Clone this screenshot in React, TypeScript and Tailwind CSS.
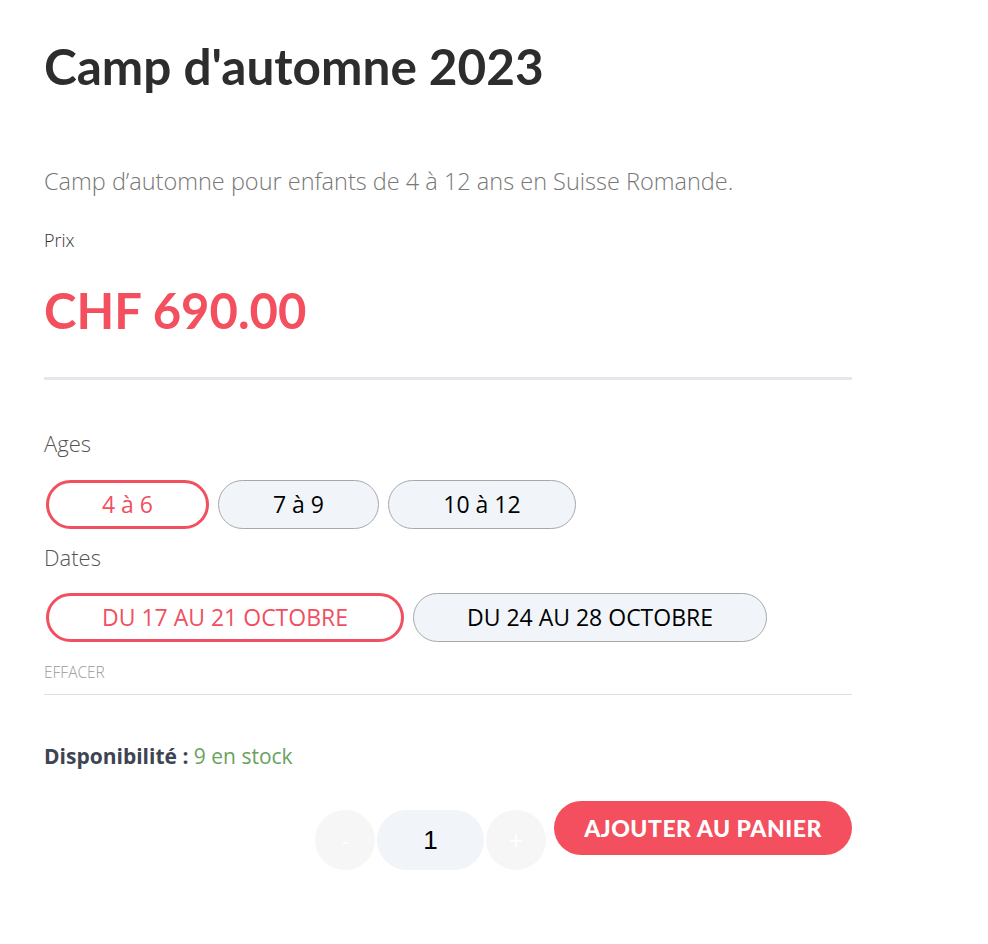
import React, { useState } from 'react';

const ages = ['4 à 6', '7 à 9', '10 à 12'];
const dates = ['DU 17 AU 21 OCTOBRE', 'DU 24 AU 28 OCTOBRE'];

const Pill: React.FC<{ label: string; active: boolean; width: string; onClick: () => void }> = ({ label, active, width, onClick }) => (
  <button
    onClick={onClick}
    className={`h-[49px] ${width} rounded-full text-[23px] font-['Open_Sans',sans-serif] ${
      active
        ? 'border-[3px] border-[#f0505f] bg-white text-[#f0505f]'
        : 'border-[1.5px] border-[#a8a8a8] bg-[#f1f5f9] text-black'
    }`}
  >
    {label}
  </button>
);

export default function App() {
  const [age, setAge] = useState(0);
  const [date, setDate] = useState(0);
  const [qty, setQty] = useState(1);

  return (
    <div className="min-h-screen bg-white">
      <div className="w-[852px] pl-[44px] pt-[36px] font-['Open_Sans',sans-serif]">
        {/* Title */}
        <h1 className="font-['Lato',sans-serif] text-[49.5px] font-bold leading-[60px] text-[#2d2d2d]">
          Camp d'automne 2023
        </h1>

        <p className="mt-[70px] text-[23.5px] font-light leading-[30px] text-[#777]">
          Camp d’automne pour enfants de 4 à 12 ans en Suisse Romande.
        </p>

        <p className="mt-[32px] text-[18px] font-light leading-[24px] text-[#333]">Prix</p>

        <p className="mt-[30px] font-['Lato',sans-serif] text-[49px] font-bold leading-[56px] text-[#f34f5e]">
          CHF 690.00
        </p>

        <div className="mt-[39px] h-[3px] bg-[#e6e6ee]" />

        {/* Ages */}
        <p className="mt-[48px] text-[22px] font-light leading-[30px] text-[#555]">Ages</p>
        <div className="mt-[22px] flex gap-[9px] pl-[2px]">
          {ages.map((a, i) => (
            <Pill
              key={a}
              label={a}
              active={age === i}
              width={i === 0 ? 'w-[163px]' : i === 1 ? 'w-[161px]' : 'w-[188px]'}
              onClick={() => setAge(i)}
            />
          ))}
        </div>

        {/* Dates */}
        <p className="mt-[13px] text-[22px] font-light leading-[30px] text-[#555]">Dates</p>
        <div className="mt-[21px] flex gap-[9px] pl-[2px]">
          {dates.map((d, i) => (
            <Pill
              key={d}
              label={d}
              active={date === i}
              width={i === 0 ? 'w-[358px]' : 'w-[354px]'}
              onClick={() => setDate(i)}
            />
          ))}
        </div>

        <button className="mt-[20px] block text-[15.5px] font-light uppercase leading-[20px] text-[#999]">
          Effacer
        </button>
        <div className="mt-[12px] h-px bg-[#dedede]" />

        {/* Availability */}
        <p className="mt-[46px] text-[21px] leading-[30px]">
          <span className="font-bold text-[#3d4452]">Disponibilité :</span>{' '}
          <span className="text-[#6aa160]">{qty > 0 ? '9 en stock' : ''}</span>
        </p>

        {/* Add to cart */}
        <div className="mt-[30px] flex items-start justify-end">
          <div className="mt-[9px] flex items-center">
            <button
              onClick={() => setQty(Math.max(1, qty - 1))}
              className="h-[60px] w-[60px] rounded-full bg-[#f6f6f6] text-[22px] text-white"
            >
              -
            </button>
            <div className="mx-[2px] flex h-[60px] w-[107px] items-center justify-center rounded-full bg-[#f1f5f9] font-['Liberation_Sans',sans-serif] text-[26px] text-black">
              {qty}
            </div>
            <button
              onClick={() => setQty(qty + 1)}
              className="h-[60px] w-[60px] rounded-full bg-[#f6f6f6] text-[26px] text-white"
            >
              +
            </button>
          </div>
          <button className="ml-[8px] h-[54px] w-[298px] rounded-full bg-[#f34f5e] font-['Lato',sans-serif] text-[23px] font-black uppercase tracking-[0.5px] text-white">
            Ajouter au panier
          </button>
        </div>
      </div>
    </div>
  );
}
